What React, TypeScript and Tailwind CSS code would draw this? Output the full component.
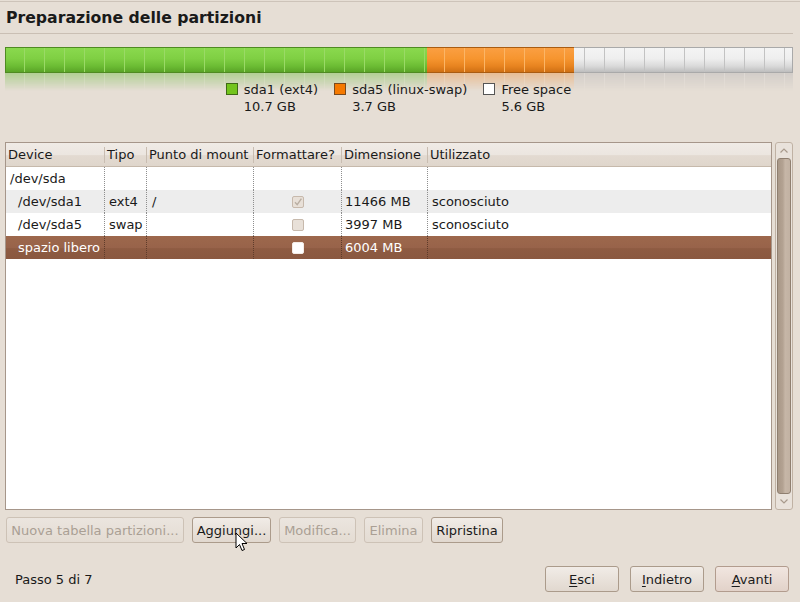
import React from "react";

function segWidths(start: number, end: number): number[] {
  const out: number[] = [];
  let x = start;
  while (x < end) {
    let next = 5 + Math.floor((x - 5) / 20 + 1) * 20;
    if (next > end) next = end;
    out.push(next - x);
    x = next;
  }
  return out;
}

function Region({
  start,
  end,
  bg,
  line,
  border,
  first,
  last,
}: {
  start: number;
  end: number;
  bg: string;
  line: string;
  border: string;
  first?: boolean;
  last?: boolean;
}) {
  const ws = segWidths(start, end);
  return (
    <div
      className={`flex h-full ${bg} ${border} border-y ${first ? "border-l" : ""} ${last ? "border-r" : ""}`}
      style={{ width: end - start }}
    >
      {ws.map((w, i) => (
        <div
          key={i}
          className={`h-full shrink-0 ${i < ws.length - 1 ? `border-r ${line}` : ""}`}
          style={{ width: w - (first && i === 0 ? 1 : 0) - (last && i === ws.length - 1 ? 1 : 0) }}
        />
      ))}
    </div>
  );
}

function ReflRegion({ start, end, bg, line }: { start: number; end: number; bg: string; line: string }) {
  const ws = segWidths(start, end);
  return (
    <div className={`flex h-full ${bg}`} style={{ width: end - start }}>
      {ws.map((w, i) => (
        <div key={i} className={`h-full shrink-0 ${i < ws.length - 1 ? `border-r ${line}` : ""}`} style={{ width: w }} />
      ))}
    </div>
  );
}

function Chevron({ up }: { up?: boolean }) {
  return (
    <svg width="8" height="5" viewBox="0 0 8 5" className="block">
      <path
        d={up ? "M0.5 4.5 L4 1 L7.5 4.5" : "M0.5 0.5 L4 4 L7.5 0.5"}
        fill="none"
        stroke="#a89a8c"
        strokeWidth="1.2"
      />
    </svg>
  );
}

function Check({ state }: { state: "dis-checked" | "dis" | "sel" }) {
  if (state === "sel") {
    return <div className="w-[12px] h-[12px] rounded-[2px] bg-white border border-[#f4ece6]" />;
  }
  return (
    <div className="w-[12px] h-[12px] rounded-[2px] bg-[#e8e0d8] border border-[#c7b9ac] flex items-center justify-center">
      {state === "dis-checked" && (
        <svg width="10" height="10" viewBox="0 0 10 10">
          <path d="M2 5.2 L4.2 7.6 L8.4 1.6" fill="none" stroke="#b9aea3" strokeWidth="1.4" />
        </svg>
      )}
    </div>
  );
}

function Btn({
  w,
  children,
  disabled,
  def,
}: {
  w: string;
  children: React.ReactNode;
  disabled?: boolean;
  def?: boolean;
}) {
  const cls = disabled
    ? "border-[#cdc2b6] bg-gradient-to-b from-[#ebe5df] to-[#e4dcd3] text-[#aa9f94]"
    : def
    ? "border-[#b29c8e] bg-gradient-to-b from-[#f1e6e0] to-[#e2d2c9] text-[#1a1a1a]"
    : "border-[#ab9b8b] bg-gradient-to-b from-[#f1ece7] to-[#e1d8cf] text-[#1a1a1a]";
  return (
    <div className={`${w} h-[26px] shrink-0 rounded-[3px] border flex items-center justify-center ${cls}`}>
      {children}
    </div>
  );
}

const cols = "grid grid-cols-[98px_42px_107px_88px_86px_1fr]";

function Row({
  cells,
  bg,
  sel,
  check,
}: {
  cells: string[];
  bg: string;
  sel?: boolean;
  check?: "dis-checked" | "dis" | "sel";
}) {
  const dot = sel ? "border-[#5e3b2a]" : "border-[#8e8e8e]";
  return (
    <div className={`${cols} h-[23px] ${bg} ${sel ? "text-white" : ""}`}>
      <div className={`flex items-center ${cells[5] === "indent" ? "pl-[12px]" : "pl-[4px]"} whitespace-nowrap`}>
        {cells[0]}
      </div>
      <div className={`flex items-center pl-[4px] border-l border-dotted ${dot}`}>{cells[1]}</div>
      <div className={`flex items-center pl-[5px] border-l border-dotted ${dot}`}>{cells[2]}</div>
      <div className={`flex items-center justify-center border-l border-dotted ${dot}`}>
        {check && <Check state={check} />}
      </div>
      <div className={`flex items-center pl-[3px] border-l border-dotted ${dot}`}>{cells[3]}</div>
      <div className={`flex items-center pl-[4px] border-l border-dotted ${dot}`}>{cells[4]}</div>
    </div>
  );
}

function HeadCell({ label, first }: { label: string; first?: boolean }) {
  return (
    <div className="flex items-center h-full">
      {!first && <div className="w-px h-[16px] bg-[#c9bdb1] shrink-0" />}
      <span className="pl-[2px]">{label}</span>
    </div>
  );
}

export default function App() {
  return (
    <div className="w-[800px] h-[602px] bg-[#e6ded5] relative overflow-hidden text-[13px] leading-[17px] text-[#1a1a1a] font-['DejaVu_Sans','Liberation_Sans',sans-serif]">
      <div className="h-px mt-px bg-[#cdc3b9]" />
      <div className="h-[31px] pl-[6px] pt-[7px] text-[15.7px] leading-[18px] font-bold text-[#1a1a1a]">
        Preparazione delle partizioni
      </div>
      <div className="h-px bg-[#cabfb4] mr-[7px]" />

      {/* partition bar */}
      <div className="mt-[13px] ml-[5px] relative h-[26px] w-[788px] flex">
        <Region
          start={5}
          end={427}
          first
          bg="bg-[linear-gradient(to_bottom,#8ad94e_0%,#7fcf43_45%,#6cbd34_75%,#5aa427_100%)]"
          line="border-[#9ad966]"
          border="border-[#4f8a22]"
        />
        <Region
          start={427}
          end={574}
          bg="bg-[linear-gradient(to_bottom,#fb9f42_0%,#f6952f_45%,#e88420_75%,#cf7014_100%)]"
          line="border-[#fbb566]"
          border="border-[#a95c12]"
        />
        <Region
          start={574}
          end={793}
          last
          bg="bg-[linear-gradient(to_bottom,#f4f4f4_0%,#eeeeee_45%,#dadada_75%,#bdbdbd_100%)]"
          line="border-[#c2c2c2]"
          border="border-[#a9a9a9]"
        />
        <div className="absolute left-0 top-[26px] h-[18px] flex opacity-60 [mask-image:linear-gradient(to_bottom,black,transparent)]">
          <ReflRegion start={5} end={427} bg="bg-[#8fc46a]" line="border-[#a9d48b]" />
          <ReflRegion start={427} end={574} bg="bg-[#e8a769]" line="border-[#efbd8d]" />
          <ReflRegion start={574} end={793} bg="bg-[#c4c2c0]" line="border-[#d6d4d2]" />
        </div>
      </div>

      {/* legend */}
      <div className="mt-[8px] flex justify-center gap-[16px] relative pr-[3px]">
        <div className="flex gap-[6px]">
          <div className="w-[12px] h-[12px] mt-[2px] bg-[#73c41d] border border-[#3f6a16]" />
          <div>
            <div>sda1 (ext4)</div>
            <div>10.7 GB</div>
          </div>
        </div>
        <div className="flex gap-[6px]">
          <div className="w-[12px] h-[12px] mt-[2px] bg-[#f57900] border border-[#7a4a1e]" />
          <div>
            <div>sda5 (linux-swap)</div>
            <div>3.7 GB</div>
          </div>
        </div>
        <div className="flex gap-[6px]">
          <div className="w-[12px] h-[12px] mt-[2px] bg-white border border-[#555555]" />
          <div>
            <div>Free space</div>
            <div>5.6 GB</div>
          </div>
        </div>
      </div>

      {/* table + scrollbar */}
      <div className="mt-[27px] ml-[5px] w-[788px] h-[368px] flex gap-[3px]">
        <div className="w-[767px] h-full border border-[#a6968a] bg-white flex flex-col">
          <div
            className={`${cols} h-[24px] border-b border-[#c6b9ab] bg-[linear-gradient(to_bottom,#f0ebe6_0%,#ece6e0_50%,#e3dad1_55%,#dfd6cc_100%)]`}
          >
            <HeadCell label="Device" first />
            <HeadCell label="Tipo" />
            <HeadCell label="Punto di mount" />
            <HeadCell label="Formattare?" />
            <HeadCell label="Dimensione" />
            <HeadCell label="Utilizzato" />
          </div>
          <Row cells={["/dev/sda", "", "", "", "", ""]} bg="bg-white" />
          <Row
            cells={["/dev/sda1", "ext4", "/", "11466 MB", "sconosciuto", "indent"]}
            bg="bg-[#ededed]"
            check="dis-checked"
          />
          <Row cells={["/dev/sda5", "swap", "", "3997 MB", "sconosciuto", "indent"]} bg="bg-white" check="dis" />
          <Row
            cells={["spazio libero", "", "", "6004 MB", "", "indent"]}
            bg="bg-[linear-gradient(to_bottom,#9d684c_0%,#98634a_50%,#8e5b42_55%,#8a5840_100%)]"
            sel
            check="sel"
          />
        </div>
        <div className="w-[18px] h-full border border-[#c0b2a4] rounded-[3px] bg-[#e9e2db] flex flex-col items-center">
          <div className="h-[15px] flex items-center justify-center">
            <Chevron up />
          </div>
          <div className="w-[14px] flex-1 rounded-[3px] border border-[#8f7f70] bg-[linear-gradient(to_right,#a99888_0%,#b3a292_40%,#c6b6a7_60%,#c2b2a3_100%)]" />
          <div className="h-[15px] flex items-center justify-center">
            <Chevron />
          </div>
        </div>
      </div>

      {/* action buttons */}
      <div className="mt-[7px] ml-[6px] flex gap-[8px]">
        <Btn w="w-[178px]" disabled>
          Nuova tabella partizioni...
        </Btn>
        <Btn w="w-[79px]">Aggiungi...</Btn>
        <Btn w="w-[77px]" disabled>
          Modifica...
        </Btn>
        <Btn w="w-[59px]" disabled>
          Elimina
        </Btn>
        <Btn w="w-[72px]">Ripristina</Btn>
      </div>

      {/* footer */}
      <div className="mt-[23px] h-[26px] flex items-center">
        <div className="pl-[15px] flex-1">Passo 5 di 7</div>
        <div className="flex gap-[11px] mr-[11px]">
          <Btn w="w-[74px]">
            <span>
              <span className="underline underline-offset-2">E</span>sci
            </span>
          </Btn>
          <Btn w="w-[74px]">
            <span>
              <span className="underline underline-offset-2">I</span>ndietro
            </span>
          </Btn>
          <Btn w="w-[74px]" def>
            <span>
              <span className="underline underline-offset-2">A</span>vanti
            </span>
          </Btn>
        </div>
      </div>

      {/* mouse cursor */}
      <svg className="absolute left-[235px] top-[532px]" width="14" height="21" viewBox="0 0 14 21">
        <path
          d="M1 1 L1 16 L4.5 12.5 L7 18.5 L9.5 17.5 L7 11.5 L12 11.5 Z"
          fill="white"
          stroke="black"
          strokeWidth="1"
          strokeLinejoin="miter"
        />
      </svg>
    </div>
  );
}
